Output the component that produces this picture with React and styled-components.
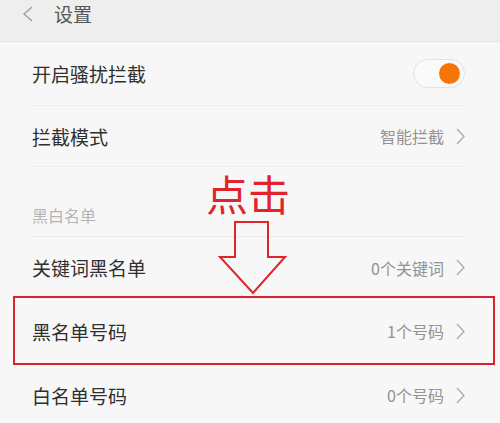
import React from 'react';
import styled, { createGlobalStyle } from 'styled-components';

const GlobalStyle = createGlobalStyle`
  html, body {
    margin: 0;
    padding: 0;
    background: #f7f7f7;
  }
  body {
    font-family: "Noto Sans CJK SC", "Noto Sans", sans-serif;
  }
`;

const Page = styled.div`
  position: relative;
  width: 500px;
  height: 423px;
  overflow: hidden;
  background: #f7f7f7;
`;

const Header = styled.div`
  height: 42px;
  display: flex;
  align-items: center;
  background: #eeeeee;
  border-bottom: 1px solid #e4e4e4;
  box-sizing: border-box;
  padding-left: 22px;
  padding-bottom: 14px;

  .title {
    margin-left: 20px;
    font-size: 19px;
    color: #555;
    line-height: 1;
  }
`;

const List = styled.div`
  display: flex;
  flex-direction: column;
`;

const Row = styled.div`
  position: relative;
  height: ${({ $h }) => $h}px;
  margin: 0 35px 0 32px;
  display: flex;
  align-items: ${({ $section }) => ($section ? 'flex-end' : 'center')};
  justify-content: space-between;
  border-bottom: ${({ $last }) => ($last ? 'none' : '1px solid #ececec')};
  box-sizing: border-box;
  padding-bottom: ${({ $section }) => ($section ? '13px' : '0')};

  ${({ $highlight }) =>
    $highlight &&
    `
    &::after {
      content: '';
      position: absolute;
      left: -19px;
      right: -30px;
      top: -3px;
      bottom: -2px;
      border: 2px solid #d8232f;
    }
  `}
`;

const Label = styled.span`
  font-size: 19px;
  color: #2f2f2f;
  line-height: 1;
`;

const SectionLabel = styled.span`
  font-size: 16px;
  color: #b4b4b4;
  line-height: 1;
`;

const Value = styled.span`
  display: flex;
  align-items: center;
  gap: 12px;
  font-size: 16px;
  color: #939393;
  line-height: 1;
`;

const Toggle = styled.div`
  width: 52px;
  height: 29px;
  box-sizing: border-box;
  border: 1px solid #e2e2e2;
  border-radius: 15px;
  background: #fafafa;
  display: flex;
  align-items: center;
  justify-content: flex-end;
  padding-right: 4px;

  &::before {
    content: '';
    width: 21px;
    height: 21px;
    border-radius: 50%;
    background: #f77408;
  }
`;

const ClickText = styled.div`
  position: absolute;
  left: 206px;
  top: 172px;
  font-size: 42px;
  font-weight: 400;
  color: #e0242c;
  line-height: 1;
`;

const ArrowWrap = styled.svg`
  position: absolute;
  left: 218px;
  top: 220px;
`;

const Chevron = ({ color = '#aaa', w = 9, h = 17 }) => (
  <svg width={w} height={h} viewBox={`0 0 ${w} ${h}`}>
    <polyline
      points={`1,1 ${w - 1},${h / 2} 1,${h - 1}`}
      fill="none"
      stroke={color}
      strokeWidth="1.3"
    />
  </svg>
);

const Back = () => (
  <svg width="12" height="16" viewBox="0 0 12 16">
    <polyline points="10,1 2,8 10,15" fill="none" stroke="#a0a0a0" strokeWidth="1.4" />
  </svg>
);

export default function App() {
  return (
    <Page>
      <GlobalStyle />
      <Header>
        <Back />
        <span className="title">设置</span>
      </Header>
      <List>
        <Row $h={64}>
          <Label>开启骚扰拦截</Label>
          <Toggle />
        </Row>
        <Row $h={61}>
          <Label>拦截模式</Label>
          <Value>
            智能拦截
            <Chevron />
          </Value>
        </Row>
        <Row $h={70} $section>
          <SectionLabel>黑白名单</SectionLabel>
        </Row>
        <Row $h={62}>
          <Label>关键词黑名单</Label>
          <Value>
            0个关键词
            <Chevron />
          </Value>
        </Row>
        <Row $h={65} $highlight>
          <Label>黑名单号码</Label>
          <Value>
            1个号码
            <Chevron />
          </Value>
        </Row>
        <Row $h={62} $last>
          <Label>白名单号码</Label>
          <Value>
            0个号码
            <Chevron />
          </Value>
        </Row>
      </List>
      <ClickText>点击</ClickText>
      <ArrowWrap width="70" height="76" viewBox="0 0 70 76">
        <polygon
          points="17,2 50,2 50,37 67,37 35,73 2,37 17,37"
          fill="none"
          stroke="#e0242c"
          strokeWidth="2"
          strokeLinejoin="miter"
        />
      </ArrowWrap>
    </Page>
  );
}
